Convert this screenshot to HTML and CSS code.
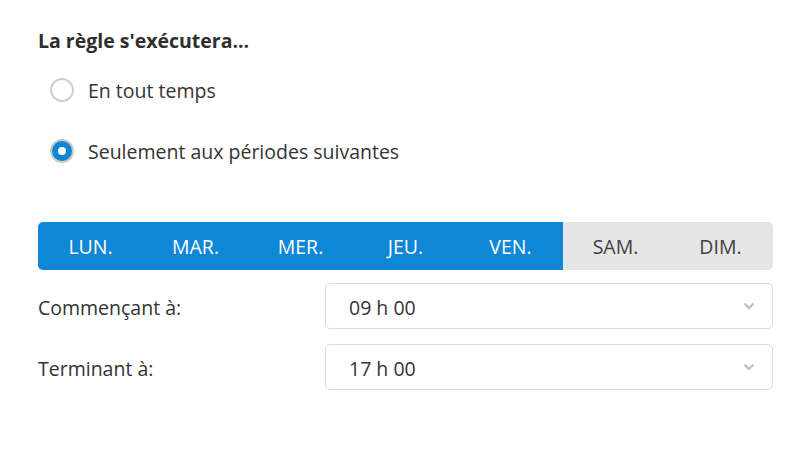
FILE: index.html
```html
<!DOCTYPE html>
<html lang="fr">
<head>
<meta charset="utf-8">
<link rel="stylesheet" href="styles.css">
</head>
<body>
<div class="page">
  <h2 class="title">La règle s'exécutera...</h2>
  <div class="radios">
    <label class="radio"><span class="dot"></span><span>En tout temps</span></label>
    <label class="radio"><span class="dot on"></span><span>Seulement aux périodes suivantes</span></label>
  </div>
  <div class="days">
    <div class="day sel">LUN.</div>
    <div class="day sel">MAR.</div>
    <div class="day sel">MER.</div>
    <div class="day sel">JEU.</div>
    <div class="day sel last">VEN.</div>
    <div class="day">SAM.</div>
    <div class="day">DIM.</div>
  </div>
  <div class="row">
    <div class="lbl">Commençant à:</div>
    <div class="select"><span>09 h 00</span>
      <svg class="chev" width="12" height="8" viewBox="0 0 12 8"><path d="M1.5 1.5 L6 6 L10.5 1.5" fill="none" stroke="#c2c2c2" stroke-width="2.4"/></svg>
    </div>
  </div>
  <div class="row">
    <div class="lbl">Terminant à:</div>
    <div class="select"><span>17 h 00</span>
      <svg class="chev" width="12" height="8" viewBox="0 0 12 8"><path d="M1.5 1.5 L6 6 L10.5 1.5" fill="none" stroke="#c2c2c2" stroke-width="2.4"/></svg>
    </div>
  </div>
</div>
</body>
</html>
```
FILE: styles.css
```css
html, body { margin: 0; padding: 0; background: #fff; }
body { font-family: "Open Sans", "Noto Sans", sans-serif; color: #333; }
.page { padding: 27px 33px 0 38px; width: 735px; }
.title { margin: 0; font-size: 19.5px; font-weight: 700; line-height: 28px; color: #2e2e2e; }
.radios { display: flex; flex-direction: column; gap: 37px; margin-top: 23px; padding-left: 12px; }
.radio { display: flex; align-items: center; gap: 14px; font-size: 19.5px; line-height: 22px; color: #333; }
.radio span:last-child { padding-top: 2px; }
.dot { width: 20px; height: 20px; border: 2px solid #cfcfcf; border-radius: 50%; box-sizing: content-box; flex: none; }
.dot.on { background: #0f87d6; border-color: #c9c9c9; position: relative; }
.dot.on::after { content: ""; position: absolute; left: 6px; top: 6px; width: 8px; height: 8px; border-radius: 50%; background: #fff; }
.days { display: grid; grid-template-columns: repeat(7, 1fr); margin-top: 59px; height: 48px; border-radius: 5px; overflow: hidden; background: #e6e6e6; }
.day { display: flex; align-items: center; justify-content: center; font-size: 19.5px; color: #404040; }
.day.sel { background: #0f87d6; color: #fff; }
.row { display: flex; align-items: center; margin-top: 13px; }
.row + .row { margin-top: 15px; }
.lbl { width: 287px; font-size: 19.5px; color: #333; padding-top: 2px; }
.select { flex: 1; border: 1px solid #dcdcdc; border-radius: 5px; display: flex; align-items: center; justify-content: space-between; padding: 2px 17px 0 23px; box-sizing: border-box; height: 46px; font-size: 19.5px; color: #333; }
.chev { display: block; margin-top: -2px; }
```
